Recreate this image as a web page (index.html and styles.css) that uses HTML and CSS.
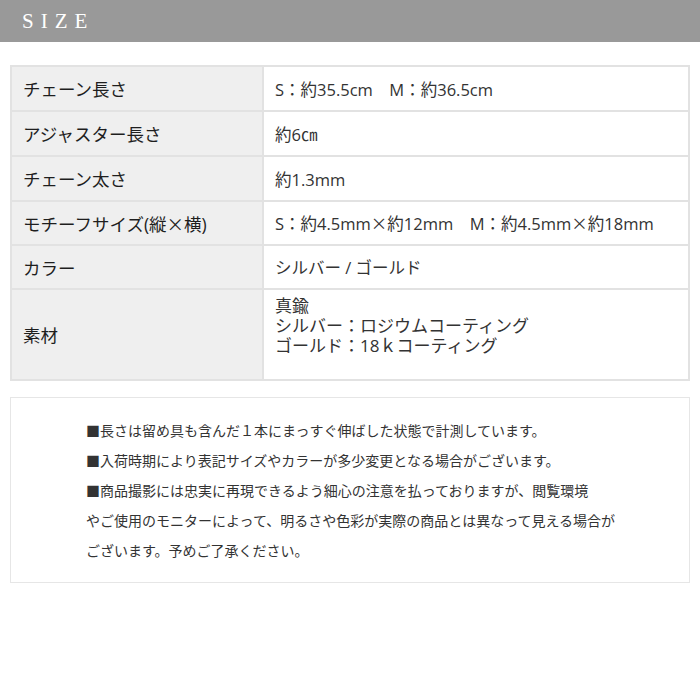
FILE: index.html
```html
<!DOCTYPE html>
<html>
<head>
    <title>SIZE</title>
    <link rel="stylesheet" href="styles.css">
</head>
<body>
    <h2 class="section-title">SIZE</h2>

    <div class="wrap">
        <table class="size-table">
            <tr>
                <th>チェーン長さ</th>
                <td>S：約35.5cm　M：約36.5cm</td>
            </tr>
            <tr>
                <th>アジャスター長さ</th>
                <td>約6㎝</td>
            </tr>
            <tr>
                <th>チェーン太さ</th>
                <td>約1.3mm</td>
            </tr>
            <tr class="short">
                <th>モチーフサイズ(縦<span class="wide">×</span>横)</th>
                <td>S：約4.5mm<span class="wide">×</span>約12mm　M：約4.5mm<span class="wide">×</span>約18mm</td>
            </tr>
            <tr class="short">
                <th>カラー</th>
                <td>シルバー / ゴールド</td>
            </tr>
            <tr class="tall">
                <th>素材</th>
                <td>真鍮<br>シルバー：ロジウムコーティング<br>ゴールド：18ｋコーティング</td>
            </tr>
        </table>

        <div class="notes">
            <p>■長さは留め具も含んだ１本にまっすぐ伸ばした状態で計測しています。<br>
            ■入荷時期により表記サイズやカラーが多少変更となる場合がございます。<br>
            ■商品撮影には忠実に再現できるよう細心の注意を払っておりますが、閲覧環境<br>
            やご使用のモニターによって、明るさや色彩が実際の商品とは異なって見える場合が<br>
            ございます。予めご了承ください。</p>
        </div>
    </div>
</body>
</html>
```

FILE: styles.css
```css
body { margin: 0; background: #fff; color: #333; font-family: "Open Sans", "Noto Sans CJK JP", sans-serif; }
.section-title { margin: 0; height: 42px; padding-left: 22px; background: #999; color: #fff; font-family: "Liberation Serif", serif; font-weight: normal; font-size: 21px; letter-spacing: 7px; line-height: 42px; }
.wrap { padding: 23px 10px 0; }
.size-table { width: 100%; border-collapse: collapse; border: 2px solid #e6e6e6; }
.size-table th, .size-table td { border: 2px solid #e2e2e2; height: 43px; padding: 0 11px; text-align: left; }
.size-table th { width: 228px; background: #efefef; font-weight: normal; font-size: 17.5px; color: #1e1e1e; }
.size-table td { font-size: 16.5px; color: #333; }
.size-table .short th, .size-table .short td { height: 42px; }
.size-table .tall td { height: 83px; vertical-align: top; padding-top: 6px; font-size: 17px; line-height: 20px; }
.wide { font-family: "Noto Sans CJK JP", sans-serif; }
.notes { margin-top: 16px; border: 1px solid #e6e6e6; padding: 17px 20px 17px 75px; }
.notes p { margin: 0; font-family: "Noto Sans CJK JP", sans-serif; font-size: 14px; line-height: 30px; color: #333; }
```
